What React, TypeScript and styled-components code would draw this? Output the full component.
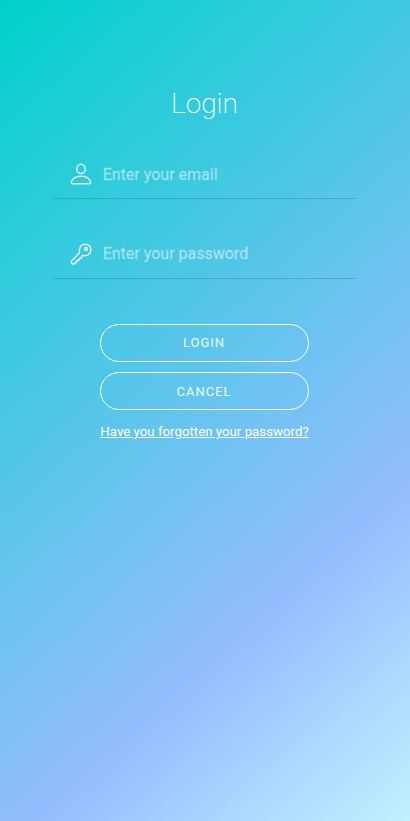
import React from "react";
import styled, { createGlobalStyle } from "styled-components";

const GlobalStyle = createGlobalStyle`
  * { box-sizing: border-box; }
  html, body { margin: 0; padding: 0; }
  body { font-family: Roboto, "Liberation Sans", sans-serif; }
`;

const Page = styled.main`
  min-height: 100vh;
  padding: 85px 54px 0 53px;
  display: flex;
  flex-direction: column;
  align-items: center;
  background: linear-gradient(138deg, #00d2cb 0%, #95bdff 72%, #c2f0ff 100%);
`;

const Title = styled.h1`
  margin: 0;
  height: 37px;
  line-height: 38px;
  font-size: 28px;
  font-weight: 200;
  color: #fff;
`;

const Form = styled.form`
  width: 100%;
  display: flex;
  flex-direction: column;
  align-items: center;
`;

const Field = styled.label<{ $gap: number; $drop?: number }>`
  width: 303px;
  height: 50px;
  margin-top: ${(p) => p.$gap}px;
  padding: 0 18px 0 17px;
  display: flex;
  align-items: center;
  gap: 10.7px;
  border-bottom: 1px solid rgba(40, 60, 80, 0.24);
  input { padding-top: ${(p) => p.$drop ?? 0}px; }
`;

const Icon = styled.svg`
  flex: none;
  width: 22px;
  height: 22px;
  fill: none;
  stroke: #e9e9e9;
  stroke-width: 1.5;
  stroke-linecap: round;
  stroke-linejoin: round;
`;

const Input = styled.input`
  flex: 1;
  min-width: 0;
  padding: 0;
  border: 0;
  outline: 0;
  background: transparent;
  font: 400 16px Roboto, "Liberation Sans", sans-serif;
  color: #fff;
  &::placeholder {
    color: rgba(255, 255, 255, 0.45);
    opacity: 1;
    -webkit-text-stroke: 0.3px rgba(255, 255, 255, 0.4);
  }
`;

const Actions = styled.div`
  width: 209px;
  margin-top: 45px;
  display: flex;
  flex-direction: column;
  gap: 10px;
`;

const Button = styled.button<{ $lift?: number }>`
  height: 38px;
  padding: 0 1px ${(p) => p.$lift ?? 0}px 0;
  border: 1px solid #fff;
  border-radius: 19px;
  background: transparent;
  font: 400 13px Roboto, "Liberation Sans", sans-serif;
  letter-spacing: 1px;
  color: rgba(255, 255, 255, 0.86);
  -webkit-text-stroke: 0.2px rgba(255, 255, 255, 0.5);
`;

const Forgot = styled.a`
  margin-top: 14px;
  font-size: 13.28px;
  line-height: 16px;
  white-space: nowrap;
  text-decoration: underline;
  color: #fff;
`;

export default function App() {
  return (
    <Page>
      <GlobalStyle />
      <Title>Login</Title>
      <Form>
        <Field $gap={27} $drop={2}>
          <Icon viewBox="0 0 22 22">
            <ellipse cx="11" cy="5.9" rx="4.2" ry="4.6" />
            <path d="M2.2 20.7C.8 20.7 1.500 18.500 2 17.600C3.500 14.500 7 13.200 11 13.200s7.500 1.300 9 4.400c.5.9 1.200 3.100-.2 3.100Z" />
          </Icon>
          <Input type="email" placeholder="Enter your email" />
        </Field>
        <Field $gap={30}>
          <Icon viewBox="0 0 22 22">
            <path d="M9.600 9.800C8.600 5.500 10.800 1.300 15 1.200C18.500 1.200 20.900 3.600 20.900 6.800C20.900 11.200 17 13.500 12.800 12.400L11.600 13.600L11.400 15.200H9.600L9.300 17H7.600L7.300 18.400L5.900 18.600L5.700 20L4 21H2.800L1.200 19.500V18.300Z" />
            <circle cx="16" cy="6" r="1.500" />
          </Icon>
          <Input type="password" placeholder="Enter your password" />
        </Field>
        <Actions>
          <Button type="button" $lift={2}>LOGIN</Button>
          <Button type="button">CANCEL</Button>
        </Actions>
        <Forgot href="#">Have you forgotten your password?</Forgot>
      </Form>
    </Page>
  );
}
